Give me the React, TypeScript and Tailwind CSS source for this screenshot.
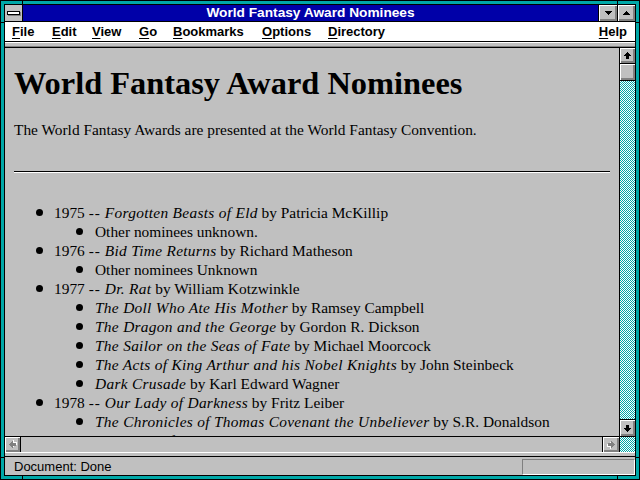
import React from "react";

type Nominee = { title?: string; author?: string; text?: string };
type Year = { year: string; title: string; author: string; nominees: Nominee[] };

const years: Year[] = [
  {
    year: "1975",
    title: "Forgotten Beasts of Eld",
    author: "Patricia McKillip",
    nominees: [{ text: "Other nominees unknown." }],
  },
  {
    year: "1976",
    title: "Bid Time Returns",
    author: "Richard Matheson",
    nominees: [{ text: "Other nominees Unknown" }],
  },
  {
    year: "1977",
    title: "Dr. Rat",
    author: "William Kotzwinkle",
    nominees: [
      { title: "The Doll Who Ate His Mother", author: "Ramsey Campbell" },
      { title: "The Dragon and the George", author: "Gordon R. Dickson" },
      { title: "The Sailor on the Seas of Fate", author: "Michael Moorcock" },
      { title: "The Acts of King Arthur and his Nobel Knights", author: "John Steinbeck" },
      { title: "Dark Crusade", author: "Karl Edward Wagner" },
    ],
  },
  {
    year: "1978",
    title: "Our Lady of Darkness",
    author: "Fritz Leiber",
    nominees: [
      { title: "The Chronicles of Thomas Covenant the Unbeliever", author: "S.R. Donaldson" },
      { title: "The Hour of the Oxen", author: "Charles L. Grant" },
    ],
  },
];

const bevel = "bg-[#c0c0c0] shadow-[inset_1px_1px_0_#fff,inset_-2px_-2px_0_#808080]";
const dither =
  "bg-[image:repeating-conic-gradient(#00a8a8_0%_25%,#ffffff_0%_50%)] bg-[length:2px_2px]";

function Arrow({ dir, disabled }: { dir: "up" | "down" | "left" | "right"; disabled?: boolean }) {
  const rot = { up: 0, right: 90, down: 180, left: 270 }[dir];
  const pts = "3.5,0 7,4 5,4 5,7 2,7 2,4 0,4";
  return (
    <svg width="9" height="9" viewBox="-1 -1 9 9" shapeRendering="crispEdges">
      <g transform={`rotate(${rot} 3.5 3.5)`}>
        {disabled && <polygon points={pts} fill="#fff" transform="translate(1 1)" />}
        <polygon points={pts} fill={disabled ? "#808080" : "#000"} />
      </g>
    </svg>
  );
}

function Tri({ up }: { up?: boolean }) {
  return (
    <svg width="7" height="4" viewBox="0 0 7 4" shapeRendering="crispEdges">
      <polygon points={up ? "3.5,0 7,4 0,4" : "0,0 7,0 3.5,4"} fill="#000" />
    </svg>
  );
}

function MenuItem({ label, w }: { label: string; w?: string }) {
  return (
    <span className={w}>
      <span className="underline underline-offset-[2px]">{label[0]}</span>
      {label.slice(1)}
    </span>
  );
}

export default function App() {
  return (
    <div className="h-[480px] w-[640px] bg-black p-px">
      <div className="relative h-full bg-[#00a8a8] p-[3px]">
        {/* resize corner marks */}
        <div className="absolute left-[21px] top-0 h-[3px] w-px bg-black" />
        <div className="absolute right-[21px] top-0 h-[3px] w-px bg-black" />
        <div className="absolute bottom-0 left-[21px] h-[3px] w-px bg-black" />
        <div className="absolute bottom-0 right-[21px] h-[3px] w-px bg-black" />
        <div className="absolute left-0 top-[21px] h-px w-[3px] bg-black" />
        <div className="absolute right-0 top-[21px] h-px w-[3px] bg-black" />
        <div className="absolute bottom-[21px] left-0 h-px w-[3px] bg-black" />
        <div className="absolute bottom-[21px] right-0 h-px w-[3px] bg-black" />

        <div className="h-full bg-black p-px">
          <div className="flex h-full flex-col bg-[#c0c0c0] font-['Liberation_Sans',Arial,sans-serif] text-black">
            {/* title bar */}
            <div className="flex h-[17px] shrink-0 border-b border-black">
              <div className="flex w-[18px] items-center justify-center border-r border-black bg-[#c0c0c0]">
                <div className="h-[4px] w-[13px] border border-black bg-white shadow-[1px_1px_0_#808080]" />
              </div>
              <div className="flex flex-1 items-center justify-center bg-[#0000a8] text-[13.7px] font-bold leading-none text-white">
                World Fantasy Award Nominees
              </div>
              <div className={`flex w-[19px] items-center justify-center border-l border-black ${bevel}`}>
                <Tri />
              </div>
              <div className={`flex w-[18px] items-center justify-center border-l border-black ${bevel}`}>
                <Tri up />
              </div>
            </div>

            {/* menu bar */}
            <div className="flex h-[20px] shrink-0 items-center border-b border-black bg-white pl-[7px] pr-[8px] text-[13px] font-bold">
              <MenuItem label="File" w="w-[40px]" />
              <MenuItem label="Edit" w="w-[40px]" />
              <MenuItem label="View" w="w-[47px]" />
              <MenuItem label="Go" w="w-[34px]" />
              <MenuItem label="Bookmarks" w="w-[89px]" />
              <MenuItem label="Options" w="w-[66px]" />
              <MenuItem label="Directory" />
              <span className="ml-auto">
                <MenuItem label="Help" />
              </span>
            </div>

            <div className="flex h-[6px] shrink-0 flex-col">
              <div className="h-px bg-white" />
              <div className="h-[3px]" />
              <div className="h-px bg-[#808080]" />
              <div className="h-px bg-black" />
            </div>

            {/* document + vertical scrollbar */}
            <div className="flex min-h-0 flex-1">
              <div className="flex-1 overflow-hidden px-[9px] pt-[17px] font-['Liberation_Serif','Times_New_Roman',serif]">
                <h1 className="text-[32.4px] font-bold leading-[37px]">World Fantasy Award Nominees</h1>
                <p className="mt-[18px] text-[15.4px] leading-[19px]">
                  The World Fantasy Awards are presented at the World Fantasy Convention.
                </p>
                <div className="mt-[32px] h-[2px] border-t border-b border-t-black border-b-white" />
                <div className="mt-[30px] text-[15.4px] leading-[19px]">
                  {years.map((y) => (
                    <div key={y.year}>
                      <div className="flex items-center">
                        <span className="ml-[22px] mr-[11px] h-[7px] w-[7px] shrink-0 rounded-full bg-black" />
                        <span className="whitespace-nowrap">
                          {y.year} <span className="tracking-[1px]">--</span>{" "}
                          <i className="tracking-[0.3px]">{y.title}</i> by {y.author}
                        </span>
                      </div>
                      {y.nominees.map((n, i) => (
                        <div key={i} className="flex items-center">
                          <span className="ml-[62px] mr-[12px] h-[7px] w-[7px] shrink-0 rounded-full bg-black" />
                          <span className="whitespace-nowrap">
                            {n.text ? (
                              n.text
                            ) : (
                              <>
                                <i className="tracking-[0.3px]">{n.title}</i> by {n.author}
                              </>
                            )}
                          </span>
                        </div>
                      ))}
                    </div>
                  ))}
                </div>
              </div>

              <div className="flex w-[16px] flex-col border-l border-black">
                <div className={`flex h-[16px] shrink-0 items-center justify-center border-b border-black ${bevel}`}>
                  <Arrow dir="up" />
                </div>
                <div className={`h-[17px] shrink-0 border-b border-black ${bevel}`} />
                <div className={`flex-1 ${dither}`} />
                <div className={`flex h-[17px] shrink-0 items-center justify-center border-t border-black ${bevel}`}>
                  <Arrow dir="down" />
                </div>
              </div>
            </div>

            {/* horizontal scrollbar */}
            <div className="flex h-[16px] shrink-0 border-t border-black">
              <div className={`flex w-[16px] items-center justify-center border-r border-black ${bevel}`}>
                <Arrow dir="left" disabled />
              </div>
              <div className="flex-1" />
              <div className={`flex w-[17px] items-center justify-center border-l border-black ${bevel}`}>
                <Arrow dir="right" disabled />
              </div>
              <div className={`w-[16px] border-l border-black ${dither}`} />
            </div>

            <div className="flex h-[5px] shrink-0 flex-col">
              <div className="h-px bg-white" />
              <div className="h-[3px]" />
              <div className="h-px bg-black" />
            </div>

            {/* status bar */}
            <div className="flex h-[18px] shrink-0 pl-[9px] pt-[2px]">
              <span className="mt-[1px] text-[13px] leading-[14px]">Document: Done</span>
              <div className="ml-auto h-[16px] w-[113px] border border-t-[#808080] border-l-[#808080] border-r-white border-b-white" />
            </div>
          </div>
        </div>
      </div>
    </div>
  );
}
